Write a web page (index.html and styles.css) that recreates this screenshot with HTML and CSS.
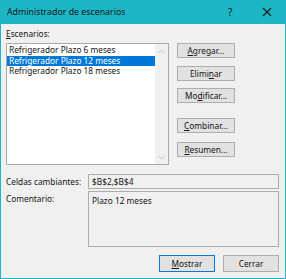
FILE: index.html
```html
<!DOCTYPE html>
<html lang="es">
    <head>
        <title>Administrador de escenarios</title>
        <meta charset="UTF-8">
        <link rel="stylesheet" href="styles.css">
    </head>

    <body>
        <div id="window">
            <div id="titlebar">
                <span class="title">Administrador de escenarios</span>
                <span class="help">?</span>
                <svg class="close" width="10" height="10" viewBox="0 0 10 10">
                    <path d="M1 1 L9 9 M9 1 L1 9" stroke="#1a1a1a" stroke-width="1.1" fill="none"/>
                </svg>
            </div>

            <div id="content">
                <div class="label"><u>E</u>scenarios:</div>

                <div id="scenarios">
                    <div class="listbox">
                        <div class="items">
                            <div class="item">Refrigerador Plazo 6 meses</div>
                            <div class="item selected">Refrigerador Plazo 12 meses</div>
                            <div class="item">Refrigerador Plazo 18 meses</div>
                        </div>
                        <div class="scrollbar">
                            <svg width="7" height="5" viewBox="0 0 7 5"><path d="M0.5 4 L3.5 1 L6.5 4" stroke="#c2c2c2" fill="none"/></svg>
                            <svg width="7" height="5" viewBox="0 0 7 5"><path d="M0.5 1 L3.5 4 L6.5 1" stroke="#c2c2c2" fill="none"/></svg>
                        </div>
                    </div>

                    <div class="buttons">
                        <div class="btn b1"><u>A</u>gregar...</div>
                        <div class="btn b2">Elimi<u>n</u>ar</div>
                        <div class="btn b3">Mo<u>d</u>ificar...</div>
                        <div class="btn b4"><u>C</u>ombinar...</div>
                        <div class="btn b5"><u>R</u>esumen...</div>
                    </div>
                </div>

                <div id="details">
                    <div class="dlabel">Celdas cambiantes:</div>
                    <div class="field cells">$B$2,$B$4</div>
                    <div class="dlabel">Comentario:</div>
                    <div class="field comment">Plazo 12 meses</div>
                </div>

                <div id="footer">
                    <div class="btn wide focused"><u>M</u>ostrar</div>
                    <div class="btn wide">Cerrar</div>
                </div>
            </div>
        </div>
    </body>
</html>
```

FILE: styles.css
```css
body{
    margin: 0;
    font-family: 'Noto Sans', 'DejaVu Sans', sans-serif;
    font-size: 8.3px;
    color: #141414;
}

#window{
    width: 286px;
    height: 279px;
    box-sizing: border-box;
    border: 1px solid #1cb6c4;
    border-top: none;
    background-color: #f0f0f0;
}

#titlebar{
    height: 24px;
    margin: 0 -1px;
    background-color: #1cb6c4;
    display: flex;
    align-items: center;
    padding-left: 7px;
}

.title{
    flex: 1;
    font-size: 8.8px;
}

.help{
    width: 34px;
    font-size: 10px;
}

.close{
    margin-right: 14px;
}

#content{
    padding: 4px 5px 0 5px;
}

.label{
    height: 12px;
    line-height: 12px;
    margin-bottom: 3px;
}

#scenarios{
    display: flex;
    gap: 8px;
}

.listbox{
    width: 163px;
    height: 122px;
    box-sizing: border-box;
    border: 1px solid #a9a9a9;
    background-color: white;
    display: flex;
}

.items{
    flex: 1;
    padding-top: 1px;
}

.item{
    height: 10.5px;
    line-height: 10.5px;
    padding-left: 2px;
    white-space: nowrap;
}

.selected{
    background-color: #0078d7;
    color: white;
}

.scrollbar{
    width: 13px;
    background-color: #f0f0f0;
    display: flex;
    flex-direction: column;
    justify-content: space-between;
    align-items: center;
    padding: 5px 0 4px 0;
}

.buttons{
    display: flex;
    flex-direction: column;
    width: 58px;
}

.btn{
    height: 15px;
    box-sizing: border-box;
    border: 1px solid #adadad;
    background-color: #e1e1e1;
    display: flex;
    align-items: center;
    justify-content: center;
}

.b2{ margin-top: 8px; }
.b3{ margin-top: 7px; }
.b4{ margin-top: 15px; }
.b5{ margin-top: 9px; }

#details{
    display: grid;
    grid-template-columns: 82px 191px;
    row-gap: 2px;
    margin-top: 9px;
}

.dlabel{
    line-height: 15px;
}

.field{
    box-sizing: border-box;
    border: 1px solid #adadad;
    padding-left: 3px;
    line-height: 13px;
}

.cells{
    height: 15px;
}

.comment{
    height: 56px;
    padding-top: 2px;
}

#footer{
    display: flex;
    justify-content: flex-end;
    gap: 8px;
    margin-top: 8px;
    padding-right: 1px;
}

.wide{
    width: 56px;
    height: 17px;
}

.focused{
    border: 1px solid #0078d7;
}
```
